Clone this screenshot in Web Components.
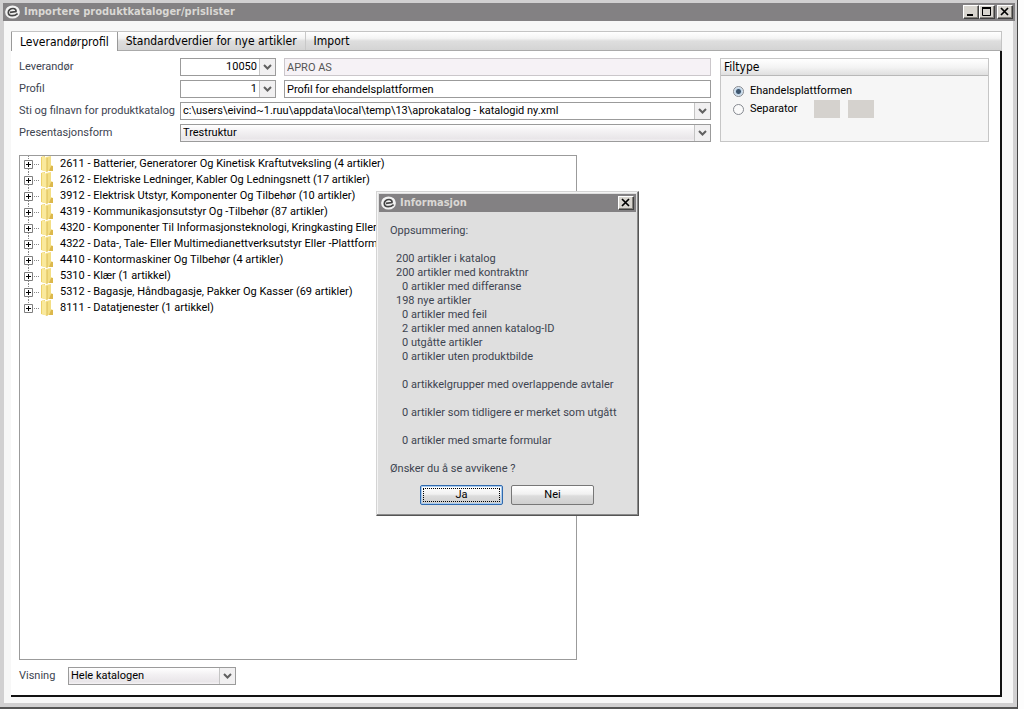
<!DOCTYPE html>
<html lang="no">
<head>
<meta charset="utf-8">
<title>Importere produktkataloger/prislister</title>
<style>
  html { height: 100%; }
  body {
    margin: 0; min-height: 100%; display: flex;
    background: #fdfdfd; color: #000;
    font: 11px/14px Roboto, "Liberation Sans", Arial, sans-serif;
    --label: #3d4450;
    --line: #9b9b9b;
    --face: linear-gradient(#fff, #f3f1f3 40%, #e9e6e9 85%, #f4f2f4);
  }
</style>
</head>
<body>
<app-window caption="Importere produktkataloger/prislister">
  <tab-strip>
    <tab-button selected>Leverandørprofil</tab-button>
    <tab-button>Standardverdier for nye artikler</tab-button>
    <tab-button>Import</tab-button>
  </tab-strip>
  <tab-panel>
    <profile-form slot="form"></profile-form>
    <file-type slot="side"></file-type>
    <catalog-tree slot="tree">
      <tree-row>2611 - Batterier, Generatorer Og Kinetisk Kraftutveksling (4 artikler)</tree-row>
      <tree-row>2612 - Elektriske Ledninger, Kabler Og Ledningsnett (17 artikler)</tree-row>
      <tree-row>3912 - Elektrisk Utstyr, Komponenter Og Tilbehør (10 artikler)</tree-row>
      <tree-row>4319 - Kommunikasjonsutstyr Og -Tilbehør (87 artikler)</tree-row>
      <tree-row>4320 - Komponenter Til Informasjonsteknologi, Kringkasting Eller T</tree-row>
      <tree-row>4322 - Data-, Tale- Eller Multimedianettverksutstyr Eller -Plattform</tree-row>
      <tree-row>4410 - Kontormaskiner Og Tilbehør (4 artikler)</tree-row>
      <tree-row>5310 - Klær (1 artikkel)</tree-row>
      <tree-row>5312 - Bagasje, Håndbagasje, Pakker Og Kasser (69 artikler)</tree-row>
      <tree-row last>8111 - Datatjenester (1 artikkel)</tree-row>
    </catalog-tree>
    <combo-box slot="foot" label="Visning" value="Hele katalogen" kind="list"></combo-box>
  </tab-panel>
  <info-dialog slot="dialog" caption="Informasjon"></info-dialog>
</app-window>

<script>
const define = (name, html, setup) => customElements.define(name, class extends HTMLElement {
  connectedCallback() {
    if (this.shadowRoot) return;
    const root = this.attachShadow({ mode: 'open' });
    root.innerHTML = html;
    if (setup) setup(this, root);
  }
});

define('app-logo', `
  <style>:host { display: block; width: 15px; height: 14px; flex: none; } svg { display: block; }</style>
  <svg width="15" height="14" viewBox="0 0 15 14" aria-hidden="true">
    <ellipse cx="7.500" cy="7" rx="7.400" ry="6.600" fill="#f2f2f2"/>
    <path d="M5 7.300L11 6.600C11.300 4.600 10 3.500 8 3.500C5.400 3.500 3.300 5.300 3.300 7.500C3.300 9.700 4.900 10.700 7.200 10.700C9.300 10.700 11 10 12.600 8.600" fill="none" stroke="#444" stroke-width="1.700"/>
  </svg>`);

define('caption-button', `
  <style>
    :host { display: block; }
    button { display: block; width: 16px; height: 14px; padding: 0; background: #d8d5cf; border: 1px solid; border-color: #fff #404040 #404040 #fff; box-shadow: inset -1px -1px #85827d; }
    svg { display: block; width: 14px; height: 12px; }
  </style>
  <button type="button"><svg viewBox="0 0 14 12" fill="none" stroke="#000" aria-hidden="true"></svg></button>`,
  (el, root) => {
    const art = {
      Minimer: '<path d="M3 9H9" stroke-width="2"/>',
      Maksimer: '<path d="M2.500 1.500H10.500V9.500H2.500Z"/><path d="M2 2H11" stroke-width="2"/>',
      Lukk: '<path d="M3 2L10 9M10 2L3 9" stroke-width="1.700"/>'
    };
    root.querySelector('button').setAttribute('aria-label', el.getAttribute('action'));
    root.querySelector('svg').innerHTML = art[el.getAttribute('action')];
  });

define('title-bar', `
  <style>
    :host { display: flex; align-items: center; gap: 4px; height: 18px; padding: 0 2px; background: #838183; color: #dad8d4; font: bold 11px/18px "DejaVu Sans Condensed", "DejaVu Sans", sans-serif; }
    h1 { flex: 1; margin: 0; font: inherit; }
    div { display: flex; }
    div ::slotted(:last-child) { margin-left: 2px; }
  </style>
  <app-logo></app-logo><h1><slot name="caption"></slot></h1><div><slot></slot></div>`);

define('app-window', `
  <style>
    :host { flex: 1; display: flex; flex-direction: column; position: relative; box-sizing: border-box; margin-right: 6px; padding: 1px 2px 4px 1px; background: #d1d0d1; border-right: 1px solid #444; border-bottom: 2px solid #555; }
    title-bar { margin: 2px 0 0 2px; }
    main { flex: 1; display: flex; flex-direction: column; margin: 0 2px 0 3px; padding: 10px 11px 6px 7px; background: #f7f7f7; }
  </style>
  <title-bar><span slot="caption"></span><caption-button action="Minimer"></caption-button><caption-button action="Maksimer"></caption-button><caption-button action="Lukk"></caption-button></title-bar>
  <main><slot></slot></main>
  <slot name="dialog"></slot>`,
  (el, root) => { root.querySelector('title-bar span').textContent = el.getAttribute('caption'); });

define('tab-strip', `
  <style>
    :host { display: flex; height: 18px; border: 1px solid #c4c4c4; border-bottom-color: #aaa; border-left: 0; background: linear-gradient(#fff, #f4f4f4 35%, #dedede 50%, #d4d4d4); }
  </style>
  <slot></slot>`, el => el.setAttribute('role', 'tablist'));

define('tab-button', `
  <style>
    :host { display: flex; }
    :host(:last-child) button { border-left: 1px solid #c8c8c8; }
    button { height: 18px; margin: 0; padding: 0 8px; border: 0; background: none; color: #000; font: 12px/18px "DejaVu Sans Condensed", "DejaVu Sans", sans-serif; }
    :host([selected]) button { height: 19px; background: #fff; border-left: 1px solid #999; border-right: 1px solid #999; }
  </style>
  <button type="button" role="tab"><slot></slot></button>`,
  (el, root) => root.querySelector('button').setAttribute('aria-selected', el.hasAttribute('selected')));

define('tab-panel', `
  <style>
    :host { flex: 1; display: flex; flex-direction: column; padding: 7px 11px 10px 8px; background: #fff; border-right: 2px solid #111; border-bottom: 2px solid #111; }
    .top { display: flex; gap: 9px; }
    .top ::slotted([slot=form]) { flex: 1; }
    ::slotted([slot=tree]) { flex: 1; width: calc(60% - 24px); margin-top: 13px; }
    ::slotted([slot=foot]) { margin-top: 7px; }
  </style>
  <div class="top"><slot name="form"></slot><slot name="side"></slot></div>
  <slot name="tree"></slot>
  <slot name="foot"></slot>`);

define('combo-box', `
  <style>
    :host { display: flex; align-items: center; color: var(--label); }
    label { width: 49px; }
    span { display: grid; width: 168px; }
    select { grid-area: 1 / 1; box-sizing: border-box; width: 100%; height: 18px; margin: 0; padding: 0 18px 0 2px; border: 1px solid var(--line); border-radius: 0; background: #fff; color: #000; font: inherit; appearance: none; outline: none; }
    svg { grid-area: 1 / 1; justify-self: end; align-self: center; width: 16px; height: 16px; margin-right: 1px; pointer-events: none; }
    :host([kind=list]) select { background: var(--face); }
    :host([kind=number]) select { text-align-last: right; }
    :host([wide]) label { width: 161px; }
    :host([wide]) span { flex: 1; }
    :host([kind=number]) span { flex: none; width: 96px; }
  </style>
  <label for="box"></label>
  <span><select id="box"><option></option></select>
    <svg viewBox="0 0 16 16" aria-hidden="true"><path d="M0 0H16V16H0Z" fill="#f1f0f1"/><path d="M.5 0V16" stroke="#c4c4c4"/><path d="M5 6L8.500 9.500L12 6" fill="none" stroke="#606060" stroke-width="2"/></svg>
  </span>`,
  (el, root) => {
    root.querySelector('label').textContent = el.getAttribute('label');
    root.querySelector('option').textContent = el.getAttribute('value');
  });

define('text-box', `
  <style>
    :host { display: flex; flex: 1; }
    input { flex: 1; min-width: 0; box-sizing: border-box; height: 18px; margin: 0; padding: 0 2px; border: 1px solid var(--line); background: #fff; color: #000; font: inherit; outline: none; }
    input:read-only { background: #f6f2f6; border-color: #cbc7cb; color: #555; }
  </style>
  <input type="text">`,
  (el, root) => {
    const input = root.querySelector('input');
    input.value = el.getAttribute('value');
    input.readOnly = el.hasAttribute('locked');
    input.setAttribute('aria-label', el.getAttribute('name'));
  });

define('profile-form', `
  <style>
    :host { display: flex; flex-direction: column; gap: 4px; }
    div { display: flex; gap: 8px; }
  </style>
  <div><combo-box wide kind="number" label="Leverandør" value="10050"></combo-box><text-box locked name="Leverandørnavn" value="APRO AS"></text-box></div>
  <div><combo-box wide kind="number" label="Profil" value="1"></combo-box><text-box name="Profilnavn" value="Profil for ehandelsplattformen"></text-box></div>
  <combo-box wide label="Sti og filnavn for produktkatalog" value="c:\\users\\eivind~1.ruu\\appdata\\local\\temp\\13\\aprokatalog - katalogid ny.xml"></combo-box>
  <combo-box wide kind="list" label="Presentasjonsform" value="Trestruktur"></combo-box>`);

define('file-type', `
  <style>
    :host { display: block; box-sizing: border-box; width: 269px; border: 1px solid #c6c6c6; background: #f6f6f6; }
    fieldset { margin: 0; padding: 0; border: 0; min-width: 0; }
    legend { display: block; box-sizing: border-box; width: 100%; height: 17px; padding: 0 3px; border-bottom: 1px solid #b8b8b8; background: linear-gradient(#fff, #f4f4f4 50%, #dfdfdf); font: 12px/16px "DejaVu Sans Condensed", "DejaVu Sans", sans-serif; }
    .body { padding: 6px 12px 0; }
    .row { display: flex; align-items: center; height: 18px; }
    label { display: flex; align-items: center; gap: 6px; }
    input { box-sizing: border-box; width: 11px; height: 11px; margin: 0; border: 1px solid #858990; border-radius: 50%; background: #fafafa; appearance: none; }
    input:checked { background: radial-gradient(#3e566e 0 2px, #bed3e6 3px, #edf5fc 5px); }
    output { width: 26px; height: 18px; margin-left: 8px; background: #d5d2ce; }
    label + output { margin-left: 16px; }
  </style>
  <fieldset>
    <legend>Filtype</legend>
    <div class="body">
      <div class="row"><label><input type="radio" name="type" checked>Ehandelsplattformen</label></div>
      <div class="row"><label><input type="radio" name="type">Separator</label><output></output><output></output></div>
    </div>
  </fieldset>`);

define('catalog-tree', `
  <style>:host { display: block; box-sizing: border-box; border: 1px solid var(--line); background: #fff; padding-left: 4px; overflow: hidden; }</style>
  <slot></slot>`, el => el.setAttribute('role', 'tree'));

define('tree-row', `
  <style>
    :host { display: flex; align-items: center; gap: 5px; height: 16px; white-space: nowrap; }
    svg { flex: none; width: 31px; height: 16px; }
    :host([last]) .below { display: none; }
  </style>
  <svg viewBox="0 0 31 16" aria-hidden="true">
    <path d="M4.500 0V4" stroke="#888" stroke-dasharray="1 1"/>
    <path class="below" d="M4.500 13V16" stroke="#888" stroke-dasharray="1 1"/>
    <path d="M10 8.500H16" stroke="#888" stroke-dasharray="1 1"/>
    <path d="M.5 4.500H8.500V12.500H.5Z" fill="#fff" stroke="#7f7f7f"/>
    <path d="M2 8.500H7M4.500 6V11" stroke="#000"/>
    <path d="M17 1L21 0V15L17 14Z" fill="#ecd069"/>
    <path d="M22 1L27 0V9L29 10V15H22Z" fill="#f3de84"/>
    <path d="M18 0L23 2V16L18 14Z" fill="#fae99c"/>
    <path d="M23 2V16" stroke="#dcbc55"/>
    <path d="M27 10H29V15H25Z" fill="#dcb84c"/>
  </svg><slot></slot>`, el => el.setAttribute('role', 'treeitem'));

define('push-button', `
  <style>
    :host { display: block; }
    button { display: block; width: 83px; height: 20px; padding: 0; border: 1px solid #777; border-radius: 2px; background: linear-gradient(#fff, #f1f1f1 45%, #dcdcdc 55%, #cfcfcf); color: #000; font: inherit; }
    :host([primary]) button { border-color: #2f69ad; box-shadow: inset 0 0 0 1px #a9ccf0; outline: 1px dotted #000; outline-offset: -4px; }
  </style>
  <button type="button"><slot></slot></button>`);

define('info-dialog', `
  <style>
    :host { position: absolute; left: 376px; top: 191px; box-sizing: border-box; width: 263px; padding: 2px 2px 10px; background: #dfdfdf; border: 1px solid; border-color: #d4d4d4 #555 #555 #d4d4d4; box-shadow: inset -1px -1px #8a8a8a, inset 1px 1px #f4f4f4; color: var(--label); }
    section { padding: 12px 11px 9px; }
    p, ul { margin: 0 0 14px; padding: 0; list-style: none; }
    ul { padding-left: 6px; }
    li.pad { padding-left: 6px; }
    li.gap { margin-top: 14px; }
    p:last-child { margin: 0; }
    div { display: flex; gap: 8px; padding-left: 41px; }
  </style>
  <title-bar><span slot="caption">Informasjon</span><caption-button action="Lukk"></caption-button></title-bar>
  <section>
    <p>Oppsummering:</p>
    <ul>
      <li>200 artikler i katalog</li>
      <li>200 artikler med kontraktnr</li>
      <li class="pad">0 artikler med differanse</li>
      <li>198 nye artikler</li>
      <li class="pad">0 artikler med feil</li>
      <li class="pad">2 artikler med annen katalog-ID</li>
      <li class="pad">0 utgåtte artikler</li>
      <li class="pad">0 artikler uten produktbilde</li>
      <li class="pad gap">0 artikkelgrupper med overlappende avtaler</li>
      <li class="pad gap">0 artikler som tidligere er merket som utgått</li>
      <li class="pad gap">0 artikler med smarte formular</li>
    </ul>
    <p>Ønsker du å se avvikene ?</p>
  </section>
  <div><push-button primary>Ja</push-button><push-button>Nei</push-button></div>`,
  el => { el.setAttribute('role', 'dialog'); el.setAttribute('aria-label', el.getAttribute('caption')); });
</script>
</body>
</html>
